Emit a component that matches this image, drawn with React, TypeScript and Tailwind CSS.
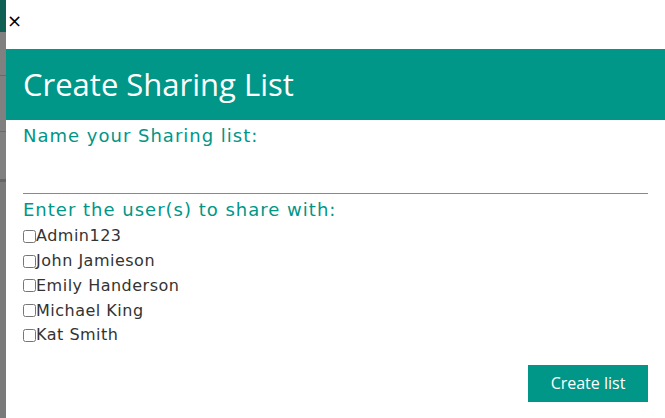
import { useState } from "react"

const users = ["Admin123", "John Jamieson", "Emily Handerson", "Michael King", "Kat Smith"]

export default function App() {
  const [name, setName] = useState("")

  return (
    <div className="flex h-[418px] w-[665px] overflow-hidden bg-white">
      {/* page behind the modal */}
      <div className="flex w-[6px] flex-col">
        <div className="h-[32px] bg-[#0f5f53]" />
        <div className="h-[43px] bg-[#808080]" />
        <div className="h-[1px] bg-[#6a6a6a]" />
        <div className="h-[55px] bg-[#808080]" />
        <div className="h-[1px] bg-[#6a6a6a]" />
        <div className="h-[47px] bg-[#808080]" />
        <div className="h-[3px] bg-[#666666]" />
        <div className="flex-1 bg-[#7a7a7a]" />
      </div>

      <div className="flex flex-1 flex-col">
        <div className="h-[49px] pl-[1px] pt-[9px]">
          <button className="text-[18px] leading-[18px] text-black" style={{ fontFamily: "'DejaVu Sans', sans-serif" }}>
            ×
          </button>
        </div>

        <div className="flex h-[71px] items-center bg-[#009688] px-[17px]">
          <h1 className="text-[31px] font-normal text-white" style={{ fontFamily: "'Open Sans', sans-serif" }}>
            Create Sharing List
          </h1>
        </div>

        <div className="flex flex-1 flex-col px-[17px]" style={{ fontFamily: "'DejaVu Sans', sans-serif" }}>
          <label className="mt-[5px] text-[18px] leading-[22px] tracking-[1px] text-[#009688]">Name your Sharing list:</label>
          <input
            value={name}
            onChange={(e) => setName(e.target.value)}
            className="h-[47px] border-b border-[#888888] bg-transparent text-[16px] outline-none"
          />
          <div className="mt-[5px] text-[18px] leading-[22px] tracking-[1px] text-[#009688]">Enter the user(s) to share with:</div>

          <div className="mt-[3px] flex flex-col">
            {users.map((u) => (
              <label key={u} className="flex h-[24.75px] items-center text-[16px] tracking-[0.5px] text-[#333333]">
                <input type="checkbox" className="m-0 h-[13px] w-[13px]" />
                <span>{u}</span>
              </label>
            ))}
          </div>

          <div className="mt-[17px] flex justify-end">
            <button className="h-[37px] w-[120px] bg-[#009688] text-[16px] text-white" style={{ fontFamily: "'Open Sans', sans-serif" }}>
              Create list
            </button>
          </div>
        </div>
      </div>
    </div>
  )
}
